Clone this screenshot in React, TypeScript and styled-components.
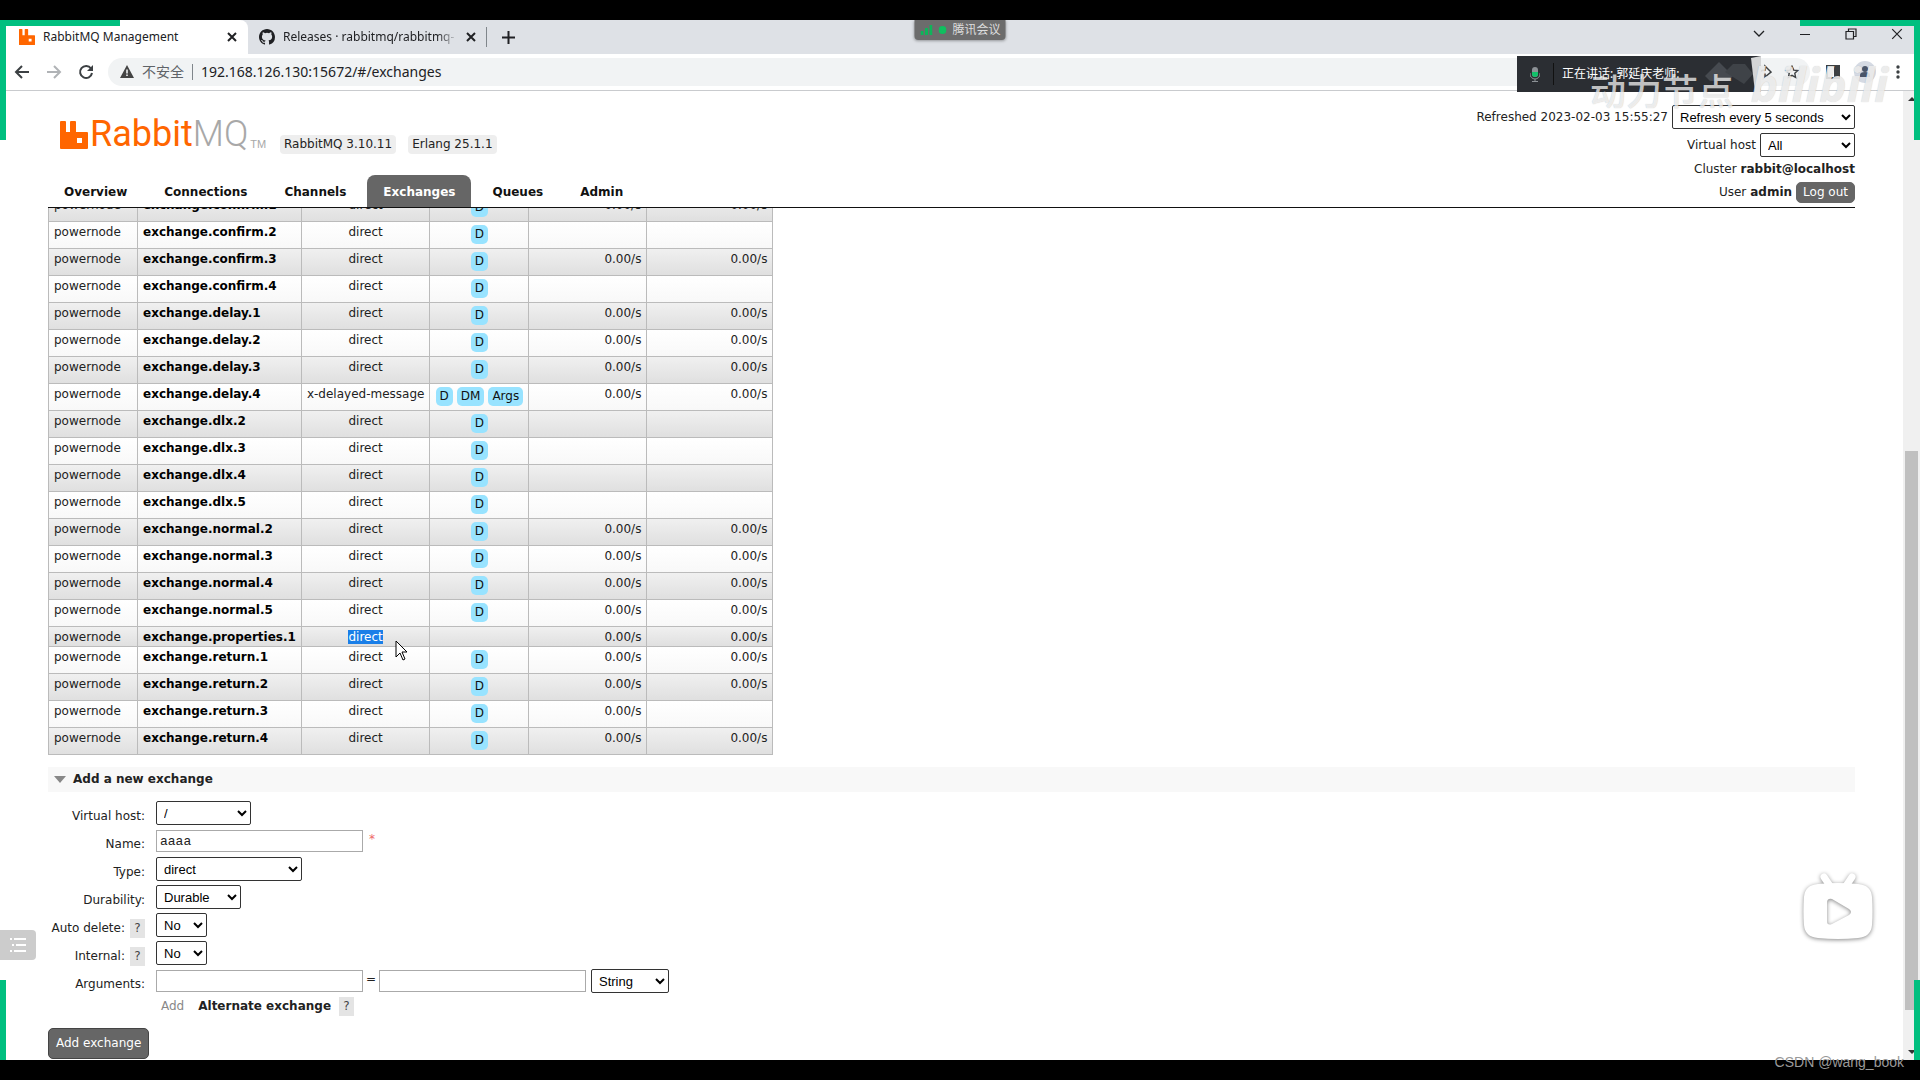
import React from 'react';
import styled, { createGlobalStyle, css } from 'styled-components';

const GlobalStyle = createGlobalStyle`
  * { box-sizing: border-box; }
  html, body, #root { height: 100%; }
  body { margin: 0; background: #000; overflow: hidden; }
  button, input, select { margin: 0; font: inherit; color: inherit; }
`;

const ui = '"Noto Sans", "Noto Sans CJK SC", sans-serif';
const verdana = '"DejaVu Sans", Verdana, sans-serif';
const arial = '"Liberation Sans", Arial, sans-serif';

const Screen = styled.div`
  position: relative;
  height: 100vh;
  padding: 20px 0;
  background: #000;
`;
const Browser = styled.div`
  height: 100%;
  display: flex;
  flex-direction: column;
  background: #fff;
  overflow: hidden;
`;

/* ---------- browser chrome ---------- */
const TabStrip = styled.div`
  display: flex;
  align-items: stretch;
  flex: none;
  height: 34px;
  padding-left: 6px;
  background: #dee1e6;
  font: 12px/34px ${ui};
  color: #202124;
`;
const Tab = styled.div<{ $active?: boolean }>`
  display: flex;
  align-items: center;
  width: ${p => (p.$active ? 242 : 238)}px;
  padding: ${p => (p.$active ? '0 11px 0 13px' : '0 10px 0 11px')};
  gap: 8px;
  background: ${p => (p.$active ? '#fff' : 'transparent')};
  border-radius: 0 8px 0 0;
`;
const TabTitle = styled.span<{ $fade?: boolean }>`
  flex: 1;
  overflow: hidden;
  white-space: nowrap;
  ${p => p.$fade && css`
    -webkit-mask-image: linear-gradient(to right, #000 88%, transparent);
    mask-image: linear-gradient(to right, #000 88%, transparent);
  `}
`;
const IconButton = styled.button`
  display: flex;
  align-items: center;
  justify-content: center;
  padding: 0;
  border: 0;
  background: none;
  color: #202124;
`;
const Divider = styled.span<{ $h: number }>`
  width: 1px;
  height: ${p => p.$h}px;
  background: #80868b;
`;
const NewTab = styled.div`
  display: flex;
  align-items: center;
  gap: 15px;
`;
const WindowControls = styled.div`
  display: flex;
  align-items: center;
  gap: 34px;
  margin-left: auto;
  padding: 0 17px 6px 0;
`;
const Toolbar = styled.div`
  display: flex;
  align-items: center;
  flex: none;
  height: 37px;
  padding: 0 14px;
  border-bottom: 1px solid #c9cbce;
  background: #fff;
`;
const NavButtons = styled.div`
  display: flex;
  gap: 16px;
  margin-right: 14px;
`;
const Address = styled.div`
  flex: 1;
  display: flex;
  align-items: center;
  gap: 8px;
  height: 28px;
  padding: 0 6px 1px 12px;
  border-radius: 14px;
  background: #f1f3f4;
  color: #5f6368;
  font: 14px/20px ${ui};
`;
const UrlInput = styled.input`
  flex: 1;
  min-width: 0;
  padding: 0;
  border: 0;
  outline: 0;
  background: none;
  color: #202124;
  font: 14px/20px ${ui};
`;
const ToolIcons = styled.div`
  display: flex;
  align-items: center;
  gap: 14px;
  margin-left: 16px;
`;

/* ---------- page ---------- */
const Viewport = styled.div`
  flex: 1;
  min-height: 0;
  display: flex;
  font: 12px/17px ${verdana};
  color: #222;
`;
const Page = styled.div`
  flex: 1;
  min-width: 0;
  display: flex;
  flex-direction: column;
  padding: 0 48px;
`;
const Header = styled.header`
  display: flex;
  justify-content: space-between;
  flex: none;
  height: 117px;
  border-bottom: 1px solid #111;
`;
const Brand = styled.div`
  display: flex;
  flex-direction: column;
  justify-content: space-between;
  padding-top: 24px;
`;
const LogoRow = styled.div`
  display: flex;
  align-items: flex-end;
  padding-left: 12px;
`;
const LogoLink = styled.a`
  display: flex;
  align-items: center;
  gap: 2px;
  width: 220px;
  color: #f60;
  text-decoration: none;
  font: 36px/39px Roboto, sans-serif;
`;
const LogoGray = styled.span`
  color: #a8a8a8;
  font-weight: 300;
`;
const Trade = styled.span`
  align-self: flex-end;
  color: #a8a8a8;
  font: 11px/19px ${arial};
`;
const Version = styled.span`
  margin-right: 12px;
  padding: 1px 4px;
  border-radius: 4px;
  background: #eee;
`;
const Nav = styled.nav`
  display: flex;
`;
const NavLink = styled.a<{ $active?: boolean }>`
  padding: 9px 16px 6px;
  margin-right: 5px;
  border-radius: 8px 8px 0 0;
  background: ${p => (p.$active ? '#666' : 'transparent')};
  color: ${p => (p.$active ? '#fff' : '#111')};
  font-weight: bold;
  text-decoration: none;
`;
const Status = styled.div`
  display: flex;
  flex-direction: column;
  align-items: flex-end;
  gap: 4px;
  padding-top: 14px;
`;
const StatusLine = styled.div`
  display: flex;
  align-items: center;
  gap: 4px;
`;
const TextInput = styled.input`
  width: 207px;
  height: 22px;
  margin-top: 1px;
  padding: 2px 3px;
  border: 1px solid #aaa;
  outline: 0;
  background: #fff;
  color: #222;
  font: 13px/16px "Liberation Mono", monospace;
`;
const Select = styled.select<{ $w: number }>`
  width: ${p => p.$w}px;
  height: 24px;
  padding: 0 3px;
  border: 1px solid #333;
  border-radius: 2px;
  background: #fff;
  color: #000;
  font: 13px/18px ${arial};
  ${TextInput} + & { margin-left: 5px; }
`;
const DarkButton = styled.button<{ $big?: boolean }>`
  padding: ${p => (p.$big ? '6px 7px' : '1px 6px')};
  border: 1px solid ${p => (p.$big ? '#444' : '#666')};
  border-radius: 5px;
  background: #666;
  color: #fff;
  font: 12px/17px ${verdana};
`;
const Main = styled.main`
  flex: 1;
  min-height: 0;
  overflow: hidden;
  display: flex;
  flex-direction: column;
  justify-content: flex-end;
  padding-bottom: 1px;
`;
const Table = styled.table`
  align-self: flex-start;
  flex: none;
  border-collapse: collapse;
`;
const Row = styled.tr<{ $alt: boolean }>`
  background: ${p => (p.$alt ? 'linear-gradient(#f0f0f0, #dfdfdf)' : 'linear-gradient(#fff, #f8f8f8)')};
`;
const Cell = styled.td<{ $align?: string; $w: number }>`
  width: ${p => p.$w}px;
  padding: 2px 5px 0;
  border: 1px solid #bbb;
  text-align: ${p => p.$align || 'left'};
  vertical-align: top;
  white-space: nowrap;
`;
const ExchangeLink = styled.a`
  color: #000;
  font-weight: bold;
  text-decoration: none;
`;
const Features = styled.div`
  display: flex;
  justify-content: center;
  gap: 4px;
  padding: 1px 0 4px;
`;
const Feature = styled.abbr`
  padding: 1px 4px;
  border-radius: 5px;
  background: #98e3ff;
  color: #111;
`;
const Selected = styled.span`
  background: #1a7fe8;
  color: #fff;
`;
const SectionTitle = styled.h2`
  display: flex;
  align-items: center;
  gap: 7px;
  flex: none;
  height: 25px;
  margin: 12px 0 9px;
  padding: 0 6px;
  background: #f8f8f8;
  font: bold 12px/17px ${verdana};
`;
const Triangle = styled.span`
  border: 6px solid transparent;
  border-top: 7px solid #888;
  border-bottom: 0;
`;
const Form = styled.form`
  flex: none;
  display: flex;
  flex-direction: column;
  align-items: flex-start;
`;
const Field = styled.div`
  display: flex;
  align-items: flex-start;
  height: 28px;
`;
const FieldLabel = styled.div`
  display: flex;
  align-items: center;
  justify-content: flex-end;
  gap: 5px;
  height: 30px;
  width: 97px;
  margin-right: 11px;
`;
const Help = styled.button`
  width: 15px;
  height: 19px;
  padding: 0;
  border: 0;
  background: #e4e4e4;
  color: #444;
  font: 12px/17px ${verdana};
`;
const Required = styled.span`
  margin-left: 6px;
  padding-top: 2px;
  color: #e66;
`;
const Equals = styled.span`
  width: 16px;
  padding-top: 2px;
  text-align: center;
`;
const ArgHints = styled.div`
  display: flex;
  align-items: center;
  gap: 8px;
  height: 19px;
  margin: 0 0 12px 113px;
  color: #888;
`;
const ArgLink = styled.a`
  margin-left: 6px;
  color: #222;
  font-weight: bold;
  text-decoration: none;
`;
const Scrollbar = styled.div`
  display: flex;
  flex-direction: column;
  align-items: center;
  flex: none;
  width: 17px;
  padding: 6px 0;
  background: #f0f0f0;
`;
const Thumb = styled.div`
  flex: 555;
  width: 13px;
  background: #c0c0c0;
`;
const Track = styled.div<{ $grow: number }>`
  flex: ${p => p.$grow};
`;
const ScrollArrow = styled.span<{ $down?: boolean }>`
  border: 4px solid transparent;
  ${p => p.$down ? 'border-top-color: #333; border-bottom: 0;' : 'border-bottom-color: #333; border-top: 0;'}
`;

/* ---------- floating overlays ---------- */
const Corner = styled.div<{ $x: 'left' | 'right'; $top?: boolean }>`
  position: absolute;
  ${p => p.$x}: 0;
  ${p => (p.$top ? 'top: 20px; height: 120px; width: 120px; border-top: 6px solid #00bf7f;' : 'bottom: 20px; height: 80px; width: 6px;')}
  border-${p => p.$x}: 6px solid #00bf7f;
  pointer-events: none;
`;
const MeetingPill = styled.div`
  position: absolute;
  top: 20px;
  left: 50%;
  transform: translateX(-50%);
  display: flex;
  align-items: center;
  gap: 6px;
  height: 20px;
  padding: 0 5px 0 6px;
  border-radius: 0 0 4px 4px;
  background: #6c6c6c;
  color: #ddd;
  font: 12px/20px ${ui};
  box-shadow: 0 1px 3px #0005;
`;
const Speaker = styled.div`
  position: absolute;
  top: 56px;
  right: 159px;
  display: flex;
  align-items: center;
  width: 244px;
  height: 36px;
  padding-left: 13px;
  gap: 8px;
  background: #2b2e33;
  color: #fff;
  font: 12px/36px ${ui};
  white-space: nowrap;
`;
const SpeakerLine = styled.span`
  width: 1px;
  height: 22px;
  margin: 0 0 0 5px;
  background: #111;
`;
const SpeakerMark = styled.svg`
  margin-left: auto;
`;
const Watermark = styled.div`
  position: absolute;
  top: 68px;
  right: 186px;
  color: #ffffffb8;
  font: 500 36px/48px ${ui};
  text-shadow: 0 0 1px #0004;
`;
const BiliMark = styled.div`
  position: absolute;
  top: 56px;
  right: 32px;
  color: #f1f1f1e0;
  font: italic bold 46px/56px ${ui};
  text-shadow: 0 0 1px #0003;
`;
const SideButton = styled.button`
  position: absolute;
  left: 0;
  top: 930px;
  display: flex;
  align-items: center;
  justify-content: center;
  width: 36px;
  height: 30px;
  padding: 0;
  border: 0;
  border-radius: 0 4px 4px 0;
  background: #ccc;
`;
const BiliIcon = styled.svg`
  position: absolute;
  right: 44px;
  top: 870px;
  filter: drop-shadow(0 1px 2px #0007);
`;
const Pointer = styled.svg`
  position: absolute;
  left: 395px;
  top: 640px;
`;
const Credit = styled.div`
  position: absolute;
  right: 16px;
  bottom: 8px;
  color: #999;
  font: 14px/20px ${arial};
`;

const RabbitMark = ({ size }: { size: number }) => (
  <svg width={size} height={size} viewBox="0 0 28 28" aria-hidden="true">
    <path fill="#f60" fillRule="evenodd" d="M1 0h4q1 0 1 1v10h4V1q0-1 1-1h4q1 0 1 1v10h11q1 0 1 1v15q0 1-1 1H1q-1 0-1-1V1q0-1 1-1zM17 17v5h5v-5z" />
  </svg>
);
const CloseIcon = ({ s = 10, w = 2 }: { s?: number; w?: number }) => (
  <svg width={s} height={s} viewBox="0 0 10 10" stroke="#202124" strokeWidth={w} fill="none"><path d="M1 1l8 8M9 1l-8 8" /></svg>
);

type Exchange = [name: string, rateIn: string, rateOut: string, type?: string, features?: string[]];
const R = '0.00/s';
const exchanges: Exchange[] = [
  ['exchange.confirm.1', R, R],
  ['exchange.confirm.2', '', ''],
  ['exchange.confirm.3', R, R],
  ['exchange.confirm.4', '', ''],
  ['exchange.delay.1', R, R],
  ['exchange.delay.2', R, R],
  ['exchange.delay.3', R, R],
  ['exchange.delay.4', R, R, 'x-delayed-message', ['D', 'DM', 'Args']],
  ['exchange.dlx.2', '', ''],
  ['exchange.dlx.3', '', ''],
  ['exchange.dlx.4', '', ''],
  ['exchange.dlx.5', '', ''],
  ['exchange.normal.2', R, R],
  ['exchange.normal.3', R, R],
  ['exchange.normal.4', R, R],
  ['exchange.normal.5', R, R],
  ['exchange.properties.1', R, R, 'direct', []],
  ['exchange.return.1', R, R],
  ['exchange.return.2', R, R],
  ['exchange.return.3', R, ''],
  ['exchange.return.4', R, R],
];

const tabs = ['Overview', 'Connections', 'Channels', 'Exchanges', 'Queues', 'Admin'];

const SelectField = ({ id, label, width, value, help }: { id: string; label: string; width: number; value: string; help?: boolean }) => (
  <Field>
    <FieldLabel><label htmlFor={id}>{label}:</label>{help && <Help type="button">?</Help>}</FieldLabel>
    <Select id={id} $w={width}><option>{value}</option></Select>
  </Field>
);

export default function App() {
  return (
    <Screen>
      <GlobalStyle />
      <Browser>
        <TabStrip>
          <Tab $active>
            <RabbitMark size={16} />
            <TabTitle>RabbitMQ Management</TabTitle>
            <IconButton aria-label="Close tab"><CloseIcon /></IconButton>
          </Tab>
          <Tab>
            <svg width="16" height="16" viewBox="0 0 16 16"><path fill="#202124" d="M8 0C3.58 0 0 3.58 0 8c0 3.54 2.29 6.53 5.47 7.59.4.07.55-.17.55-.38v-1.49c-2.01.37-2.53-.49-2.69-.94-.09-.23-.48-.94-.82-1.13-.28-.15-.68-.52-.01-.53.63-.01 1.08.58 1.23.82.72 1.21 1.87.87 2.33.66.07-.52.28-.87.51-1.07-1.78-.2-3.64-.89-3.64-3.95 0-.87.31-1.59.82-2.15-.08-.2-.36-1.02.08-2.12 0 0 .67-.21 2.2.82a7.42 7.42 0 014 0c1.53-1.04 2.2-.82 2.2-.82.44 1.1.16 1.92.08 2.12.51.56.82 1.27.82 2.15 0 3.07-1.87 3.75-3.65 3.95.29.25.54.73.54 1.48v2.19c0 .21.15.46.55.38A8.01 8.01 0 0016 8c0-4.42-3.58-8-8-8z" /></svg>
            <TabTitle $fade>Releases · rabbitmq/rabbitmq-</TabTitle>
            <IconButton aria-label="Close tab"><CloseIcon /></IconButton>
          </Tab>
          <NewTab>
            <Divider $h={20} />
            <IconButton aria-label="New tab">
              <svg width="13" height="13" viewBox="0 0 13 13" stroke="#202124" strokeWidth="2"><path d="M6.500 0v13M0 6.500h13" /></svg>
            </IconButton>
          </NewTab>
          <WindowControls>
            <IconButton aria-label="Search tabs"><svg width="12" height="12" viewBox="0 0 12 12" stroke="#202124" fill="none" strokeWidth="1.300"><path d="M1 3l5 5 5-5" /></svg></IconButton>
            <IconButton aria-label="Minimize"><svg width="12" height="12" viewBox="0 0 12 12" stroke="#202124"><path d="M1 6.500h10" /></svg></IconButton>
            <IconButton aria-label="Restore"><svg width="12" height="12" viewBox="0 0 12 12" stroke="#202124" fill="none" strokeWidth="1.200"><path d="M1 3.500h7.500V11H1zM3.500 3V1H11v7.500H9" /></svg></IconButton>
            <IconButton aria-label="Close"><CloseIcon s={12} w={1} /></IconButton>
          </WindowControls>
        </TabStrip>
        <Toolbar>
          <NavButtons>
            <IconButton aria-label="Back"><svg width="16" height="16" viewBox="0 0 16 16" stroke="#3c4043" fill="none" strokeWidth="2"><path d="M15 8H2M8 2L2 8l6 6" /></svg></IconButton>
            <IconButton aria-label="Forward"><svg width="16" height="16" viewBox="0 0 16 16" stroke="#b0b3b6" fill="none" strokeWidth="2"><path d="M1 8h13M8 2l6 6-6 6" /></svg></IconButton>
            <IconButton aria-label="Reload"><svg width="16" height="16" viewBox="0 0 16 16" stroke="#3c4043" fill="none" strokeWidth="2"><path d="M13 4.500A6 6 0 1 0 14 9" /><path d="M15 1v6H9z" fill="#3c4043" stroke="none" /></svg></IconButton>
          </NavButtons>
          <Address>
            <svg width="14" height="13" viewBox="0 0 14 13"><path fill="#444" fillRule="evenodd" d="M7 0l7 13H0zM6.200 4.500v4h1.600v-4zM6.200 9.500V11h1.600V9.500z" /></svg>
            不安全
            <Divider $h={16} />
            <UrlInput aria-label="Address" defaultValue="192.168.126.130:15672/#/exchanges" />
            <IconButton aria-label="Share"><svg width="16" height="16" viewBox="0 0 16 16" stroke="#3c4043" fill="none" strokeWidth="1.500"><path d="M2 13c0-5 3-7 7-7V2l6 6-6 5V9.500" /></svg></IconButton>
            <IconButton aria-label="Bookmark"><svg width="24" height="14" viewBox="-4 0 24 16" stroke="#3c4043" fill="none" strokeWidth="1.600"><path d="M8 1.500l2 4.300 4.600.5-3.400 3.200.9 4.600L8 11.800l-4.100 2.300.9-4.600L1.400 6.300l4.600-.5z" /></svg></IconButton>
          </Address>
          <ToolIcons>
            <IconButton aria-label="Side panel"><svg width="14" height="14" viewBox="0 0 14 14"><path fill="#3c4043" fillRule="evenodd" d="M0 0h14v14H0zM2 2v10h6V2z" /></svg></IconButton>
            <IconButton aria-label="Profile"><svg width="22" height="22" viewBox="0 0 22 22"><circle cx="11" cy="11" r="11" fill="#d5dae3" /><circle cx="11" cy="8" r="3" fill="#4a5568" /><path d="M6 16v-2q0-3 5-3t5 3v2z" fill="#4a5568" /></svg></IconButton>
            <IconButton aria-label="Menu"><svg width="16" height="14" viewBox="-4 0 16 14" fill="#3c4043"><circle cx="4" cy="2" r="1.700" /><circle cx="4" cy="7" r="1.700" /><circle cx="4" cy="12" r="1.700" /></svg></IconButton>
          </ToolIcons>
        </Toolbar>
        <Viewport>
          <Page>
            <Header>
              <Brand>
                <LogoRow>
                  <LogoLink href="#/"><RabbitMark size={28} /><span>Rabbit<LogoGray>MQ</LogoGray></span><Trade>TM</Trade></LogoLink>
                  <Version>RabbitMQ 3.10.11</Version>
                  <Version>Erlang 25.1.1</Version>
                </LogoRow>
                <Nav>
                  {tabs.map(t => <NavLink key={t} href={'#/' + t.toLowerCase()} $active={t === 'Exchanges'}>{t}</NavLink>)}
                </Nav>
              </Brand>
              <Status>
                <StatusLine>Refreshed 2023-02-03 15:55:27<Select aria-label="Refresh interval" $w={183}><option>Refresh every 5 seconds</option></Select></StatusLine>
                <StatusLine><label htmlFor="vhost-filter">Virtual host</label><Select id="vhost-filter" $w={95}><option>All</option></Select></StatusLine>
                <StatusLine>Cluster<b>rabbit@localhost</b></StatusLine>
                <StatusLine>User<b>admin</b><DarkButton>Log out</DarkButton></StatusLine>
              </Status>
            </Header>
            <Main>
              <Table>
                <tbody>
                  {exchanges.map(([name, a, b, type = 'direct', features = ['D']], i) => (
                    <Row key={name} $alt={i % 2 === 0}>
                      <Cell $w={89}>powernode</Cell>
                      <Cell $w={163}><ExchangeLink href="#/exchanges">{name}</ExchangeLink></Cell>
                      <Cell $w={128} $align="center">{features.length ? type : <Selected>{type}</Selected>}</Cell>
                      <Cell $w={99}>{features.length > 0 && <Features>{features.map(f => <Feature key={f}>{f}</Feature>)}</Features>}</Cell>
                      <Cell $w={118} $align="right">{a}</Cell>
                      <Cell $w={126} $align="right">{b}</Cell>
                    </Row>
                  ))}
                </tbody>
              </Table>
              <SectionTitle><Triangle />Add a new exchange</SectionTitle>
              <Form>
                <SelectField id="vhost" label="Virtual host" width={95} value="/" />
                <Field>
                  <FieldLabel><label htmlFor="name">Name:</label></FieldLabel>
                  <TextInput id="name" defaultValue="aaaa" />
                  <Required>*</Required>
                </Field>
                <SelectField id="type" label="Type" width={146} value="direct" />
                <SelectField id="durability" label="Durability" width={85} value="Durable" />
                <SelectField id="autodelete" label="Auto delete" width={51} value="No" help />
                <SelectField id="internal" label="Internal" width={51} value="No" help />
                <Field>
                  <FieldLabel><label htmlFor="argkey">Arguments:</label></FieldLabel>
                  <TextInput id="argkey" />
                  <Equals>=</Equals>
                  <TextInput aria-label="Argument value" />
                  <Select aria-label="Argument type" $w={78}><option>String</option></Select>
                </Field>
                <ArgHints>Add<ArgLink href="#/exchanges">Alternate exchange</ArgLink><Help type="button">?</Help></ArgHints>
                <DarkButton $big type="button">Add exchange</DarkButton>
              </Form>
            </Main>
          </Page>
          <Scrollbar><ScrollArrow /><Track $grow={347} /><Thumb /><Track $grow={40} /><ScrollArrow $down /></Scrollbar>
        </Viewport>
      </Browser>

      <Corner $x="left" $top />
      <Corner $x="right" $top />
      <Corner $x="left" />
      <Corner $x="right" />
      <MeetingPill>
        <svg width="12" height="10" viewBox="0 0 12 10" fill="#0fb45a"><path d="M0 6h3v4H0zM4.500 3h3v7h-3zM9 0h3v10H9z" /></svg>
        <svg width="8" height="8" viewBox="0 0 8 8"><circle cx="4" cy="4" r="4" fill="#0fbf5f" /></svg>
        腾讯会议
      </MeetingPill>
      <Speaker>
        <svg width="10" height="15" viewBox="0 0 10 15"><rect x="2" width="6" height="10" rx="3" fill="#8c9196" /><path d="M2 5h6v2a3 3 0 01-6 0z" fill="#12c06a" /><path d="M0 6v1a5 5 0 0010 0V6M5 12v3M2 14.500h6" fill="none" stroke="#8c9196" /></svg>
        <SpeakerLine />
        正在讲话: 郭延庆老师:
        <SpeakerMark width="58" height="36" viewBox="0 0 58 36">
          <path d="M2 20L16 6l14 14-5 5H7z" fill="#464a50" />
          <path d="M22 16l8-8h12l8 10-9 10z" fill="#3f4348" />
          <path d="M48 2l10-2v36h-6z" fill="#d4d5d6" />
        </SpeakerMark>
      </Speaker>
      <Watermark>动力节点</Watermark>
      <BiliMark>bilibili</BiliMark>
      <Pointer width="13" height="21" viewBox="0 0 13 21"><path d="M1 1v16l4-4 3 7 2-1-3-7h5z" fill="#fff" stroke="#000" /></Pointer>
      <SideButton aria-label="Contents">
        <svg width="18" height="14" viewBox="0 0 18 14" stroke="#fff" strokeWidth="2"><path d="M1 1h2M5 1h12M3 7h2M7 7h10M1 13h2M5 13h12" /></svg>
      </SideButton>
      <BiliIcon width="76" height="72" viewBox="0 0 76 72">
        <path fill="none" stroke="#fff" strokeWidth="7" strokeLinecap="round" d="M24 7l6 9M52 7l-6 9" />
        <path fill="#fff" fillRule="evenodd" d="M18 14Q38 12 58 14 71 15 72 27 73 42 72 55 71 67 58 68 38 70 18 68 5 67 4 55 3 42 4 27 5 15 18 14zM27 33v18q0 5 5 3l17-9q4-3 0-6l-17-10q-5-1-5 4z" />
      </BiliIcon>
      <Credit>CSDN @wang_book</Credit>
    </Screen>
  );
}
